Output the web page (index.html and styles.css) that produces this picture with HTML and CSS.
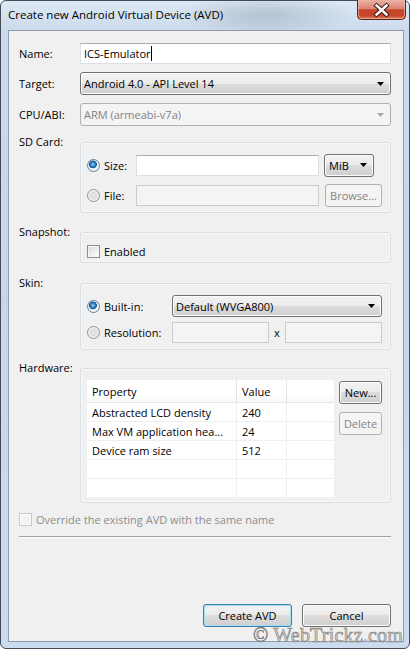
FILE: index.html
```html
<!DOCTYPE html>
<html>
<head>
<meta charset="utf-8">
<title>Create new Android Virtual Device (AVD)</title>
<link rel="stylesheet" href="styles.css">
</head>
<body>
<div class="window">
  <div class="titlebar">
    <span class="title">Create new Android Virtual Device (AVD)</span>
    <div class="close">
      <svg width="49" height="20" viewBox="0 0 49 20">
        <defs>
          <linearGradient id="cg" x1="0" y1="0" x2="0" y2="1">
            <stop offset="0" stop-color="#eab2a5"/>
            <stop offset="0.45" stop-color="#d98472"/>
            <stop offset="0.5" stop-color="#c6462c"/>
            <stop offset="0.8" stop-color="#c9452a"/>
            <stop offset="1" stop-color="#de8a66"/>
          </linearGradient>
        </defs>
        <path d="M0.5 0 V15.5 Q0.5 19.5 4.5 19.5 H44.5 Q48.5 19.5 48.5 15.5 V0" fill="url(#cg)" stroke="#5a2117" stroke-width="1"/>
        <path d="M1.5 0 V15 Q1.5 18.5 5 18.5 H44 Q47.5 18.5 47.5 15 V0" fill="none" stroke="#f2c4b8" stroke-opacity="0.6" stroke-width="1"/>
        <path d="M19.5 5.5 L29.5 14.5 M29.5 5.5 L19.5 14.5" stroke="#3f1c17" stroke-width="4.4" stroke-linecap="square"/>
        <path d="M19.5 5.5 L29.5 14.5 M29.5 5.5 L19.5 14.5" stroke="#ffffff" stroke-width="2.4" stroke-linecap="square"/>
      </svg>
    </div>
  </div>
  <div class="frame">
    <div class="client">
      <div class="row name-row">
        <span class="lbl">Name:</span>
        <div class="textbox wide">ICS-Emulator<span class="caret"></span></div>
      </div>
      <div class="row target-row">
        <span class="lbl">Target:</span>
        <div class="combo wide"><span class="ctext">Android 4.0 - API Level 14</span><svg class="arrow" width="7" height="4" viewBox="0 0 7 4"><path d="M0 0 H7 L3.5 4 Z"/></svg></div>
      </div>
      <div class="row cpu-row">
        <span class="lbl">CPU/ABI:</span>
        <div class="combo wide disabled"><span class="ctext">ARM (armeabi-v7a)</span><svg class="arrow" width="7" height="4" viewBox="0 0 7 4"><path d="M0 0 H7 L3.5 4 Z"/></svg></div>
      </div>

      <div class="grow-row sd-row">
        <span class="lbl">SD Card:</span>
        <div class="group sd-group">
          <label class="opt"><span class="radio on"></span><span>Size:</span></label>
          <div class="textbox"></div>
          <div class="combo mib"><span class="ctext">MiB</span><svg class="arrow" width="7" height="4" viewBox="0 0 7 4"><path d="M0 0 H7 L3.5 4 Z"/></svg></div>
          <label class="opt"><span class="radio"></span><span>File:</span></label>
          <div class="textbox disabled"></div>
          <div class="button disabled browse">Browse...</div>
        </div>
      </div>

      <div class="grow-row snap-row">
        <span class="lbl">Snapshot:</span>
        <div class="group snap-group">
          <label class="opt"><span class="check"></span><span>Enabled</span></label>
        </div>
      </div>

      <div class="grow-row skin-row">
        <span class="lbl">Skin:</span>
        <div class="group skin-group">
          <label class="opt"><span class="radio on"></span><span>Built-in:</span></label>
          <div class="combo"><span class="ctext">Default (WVGA800)</span><svg class="arrow" width="7" height="4" viewBox="0 0 7 4"><path d="M0 0 H7 L3.5 4 Z"/></svg></div>
          <label class="opt"><span class="radio"></span><span>Resolution:</span></label>
          <div class="res">
            <div class="textbox disabled"></div>
            <span class="times">x</span>
            <div class="textbox disabled"></div>
          </div>
        </div>
      </div>

      <div class="grow-row hw-row">
        <span class="lbl">Hardware:</span>
        <div class="group hw-group">
          <div class="table">
            <div class="tr th"><span class="c1">Property</span><span class="c2">Value</span><span class="c3"></span></div>
            <div class="tr"><span class="c1">Abstracted LCD density</span><span class="c2">240</span><span class="c3"></span></div>
            <div class="tr"><span class="c1">Max VM application hea...</span><span class="c2">24</span><span class="c3"></span></div>
            <div class="tr"><span class="c1">Device ram size</span><span class="c2">512</span><span class="c3"></span></div>
            <div class="tr"><span class="c1"></span><span class="c2"></span><span class="c3"></span></div>
            <div class="tr last"><span class="c1"></span><span class="c2"></span><span class="c3"></span></div>
          </div>
          <div class="side">
            <div class="button">New...</div>
            <div class="button disabled">Delete</div>
          </div>
        </div>
      </div>

      <label class="opt override"><span class="check disabled"></span><span>Override the existing AVD with the same name</span></label>
      <div class="sep"></div>

      <div class="actions">
        <div class="button default">Create AVD</div>
        <div class="button">Cancel</div>
      </div>
    </div>
  </div>
  <div class="watermark">© WebTrickz.com</div>
</div>
</body>
</html>
```

FILE: styles.css
```css
html, body {
  margin: 0;
  padding: 0;
}
body {
  width: 410px;
  height: 649px;
  overflow: hidden;
  background: #ffffff;
  font-family: "Open Sans", "Noto Sans", sans-serif;
  font-size: 11px;
  color: #000000;
}
.window {
  position: relative;
  box-sizing: border-box;
  width: 410px;
  height: 649px;
  border: 1px solid #444c57;
  border-radius: 6px;
  display: flex;
  flex-direction: column;
  background:
    radial-gradient(ellipse 90px 22px at 265px 14px, rgba(120,135,150,0.35), rgba(120,135,150,0) 100%),
    linear-gradient(180deg, #dde8f4 0px, #cbdbed 30px, #c6d7eb 300px, #cbdcee 649px);
}
.titlebar {
  height: 29px;
  display: flex;
  align-items: flex-start;
  flex-shrink: 0;
}
.title {
  padding-left: 7px;
  padding-top: 5px;
  line-height: 18px;
  font-size: 11.5px;
  color: #000000;
}
.close {
  margin-left: auto;
  margin-right: 3px;
  margin-top: -1px;
  height: 20px;
}
.close svg {
  display: block;
}
.frame {
  flex: 1;
  display: flex;
  padding: 0 5px 6px 7px;
}
.client {
  flex: 1;
  display: flex;
  flex-direction: column;
  background: #f0f0f0;
  border: 1px solid #8f9bab;
  padding: 12px 12px 14px 10px;
}

/* rows */
.row {
  display: flex;
  align-items: center;
}
.grow-row {
  display: flex;
  align-items: flex-start;
}
.lbl {
  width: 61px;
  flex-shrink: 0;
  line-height: 16px;
}
.wide {
  flex: 1;
}
.target-row { margin-top: 8px; }
.cpu-row { margin-top: 8px; }
.sd-row { margin-top: 8px; }
.snap-row { margin-top: 11px; }
.skin-row { margin-top: 12px; }
.hw-row { margin-top: 10px; }

/* controls */
.textbox {
  box-sizing: border-box;
  height: 21px;
  background: #ffffff;
  border: 1px solid #dbdfe6;
  border-top-color: #abadb3;
  padding: 0 3px;
  line-height: 19px;
  display: flex;
  align-items: center;
}
.textbox.disabled {
  background: #f4f4f4;
  border-color: #c9cbcf;
}
.caret {
  width: 1px;
  height: 15px;
  background: #000000;
}
.combo {
  box-sizing: border-box;
  height: 23px;
  border: 1px solid #707070;
  border-radius: 3px;
  background: linear-gradient(180deg, #f2f2f2 0%, #ebebeb 50%, #dddddd 50%, #cfcfcf 100%);
  box-shadow: inset 0 0 0 1px #fcfcfc;
  display: flex;
  align-items: center;
  padding: 0 6px 0 3px;
}
.ctext {
  flex: 1;
  white-space: nowrap;
}
.arrow {
  display: block;
  fill: #000000;
  flex-shrink: 0;
}
.combo.disabled {
  background: #f4f4f4;
  border-color: #adb2b5;
  box-shadow: none;
  color: #838383;
}
.combo.disabled .arrow {
  fill: #a7a7a7;
}
.button {
  box-sizing: border-box;
  height: 23px;
  border: 1px solid #707070;
  border-radius: 3px;
  background: linear-gradient(180deg, #f2f2f2 0%, #ebebeb 50%, #dddddd 50%, #cfcfcf 100%);
  box-shadow: inset 0 0 0 1px #fcfcfc;
  display: flex;
  align-items: center;
  justify-content: center;
  white-space: nowrap;
}
.button.disabled {
  background: #f4f4f4;
  border-color: #adb2b5;
  box-shadow: none;
  color: #838383;
}
.button.default {
  border-color: #3c7fb1;
  box-shadow: inset 0 0 0 1px #a6dcf6;
}

/* radio / check */
.opt {
  display: flex;
  align-items: center;
  gap: 4px;
  white-space: nowrap;
}
.radio {
  box-sizing: border-box;
  width: 13px;
  height: 13px;
  border-radius: 50%;
  border: 1px solid #8e8f8f;
  background: radial-gradient(circle at 50% 50%, #e8e8e8 0, #dcdcdc 3px, #f6f6f6 5.5px);
  flex-shrink: 0;
}
.radio.on {
  border-color: #5c7f9f;
  background: radial-gradient(circle at 45% 40%, #8fd0f5 0, #3c8dc7 2px, #17528a 3.6px, #e2eef7 4.2px, #f4f4f4 5.5px);
}
.check {
  box-sizing: border-box;
  width: 13px;
  height: 13px;
  border: 1px solid #8e8f8f;
  background: linear-gradient(135deg, #d6d6d6 0%, #f4f4f4 70%, #ffffff 100%);
  box-shadow: inset 0 0 0 1px #f4f4f4;
  flex-shrink: 0;
}
.check.disabled {
  border-color: #c7c8c9;
  background: #f4f4f4;
  box-shadow: inset 0 0 0 1px #fbfbfb;
}

/* groups */
.group {
  box-sizing: border-box;
  flex: 1;
  margin-top: 8px;
  border: 1px solid #d5dfe5;
  border-radius: 3px;
  box-shadow: inset 0 0 0 1px #f8f8f8;
}
.sd-group {
  display: grid;
  grid-template-columns: 43px 183px auto;
  grid-template-rows: 22px 22px;
  column-gap: 6px;
  row-gap: 8px;
  align-items: center;
  justify-items: start;
  padding: 11px 8px 6px 6px;
}
.sd-group .textbox {
  width: 183px;
}
.mib {
  width: 50px;
  height: 23px;
  margin-left: -1px;
  padding-left: 4px;
}
.browse {
  width: 57px;
}
.snap-group {
  padding: 11px 6px 3px 6px;
}
.snap-group .opt {
  height: 16px;
  margin-top: -1px;
}
.skin-group {
  display: grid;
  grid-template-columns: 79px 210px;
  grid-template-rows: 22px 21px;
  column-gap: 6px;
  row-gap: 5px;
  align-items: center;
  padding: 11px 8px 6px 6px;
}
.skin-group .combo {
  height: 22px;
}
.res {
  display: flex;
  align-items: center;
}
.res .textbox {
  width: 97px;
}
.times {
  width: 16px;
  text-align: center;
}
.hw-group {
  display: flex;
  align-items: flex-start;
  gap: 5px;
  padding: 11px 7px 5px 6px;
}
.table {
  width: 247px;
  background: #ffffff;
  display: flex;
  flex-direction: column;
}
.tr {
  display: flex;
  height: 19px;
  border-bottom: 1px solid #efefef;
  box-sizing: border-box;
}
.tr.th {
  height: 23px;
  border-bottom: 1px solid #e5e5e5;
  background: linear-gradient(180deg, #ffffff 0%, #ffffff 60%, #f7f8f9 100%);
}
.tr.last {
  height: 18px;
  border-bottom: none;
}
.tr span {
  box-sizing: border-box;
  display: flex;
  align-items: center;
  padding: 0 5px;
  white-space: nowrap;
  overflow: hidden;
}
.c1 {
  width: 150px;
  border-right: 1px solid #efefef;
}
.c2 {
  width: 50px;
  border-right: 1px solid #efefef;
}
.c3 {
  flex: 1;
}
.th .c1, .th .c2 {
  border-right-color: #e5e5e5;
}
.side {
  width: 43px;
  display: flex;
  flex-direction: column;
  gap: 8px;
  margin-top: 1px;
}

/* bottom */
.override {
  margin-top: 8px;
  height: 16px;
  color: #8d8d8d;
}
.sep {
  margin-top: 9px;
  border-top: 1px solid #a0a0a0;
  border-bottom: 1px solid #ffffff;
  height: 0;
}
.actions {
  margin-top: auto;
  display: flex;
  justify-content: flex-end;
  gap: 10px;
}
.actions .button {
  width: 89px;
}
.watermark {
  position: absolute;
  right: 6px;
  bottom: 2px;
  font-family: "Liberation Serif", serif;
  font-size: 20px;
  line-height: 22px;
  color: #d2d2d2;
  -webkit-text-stroke: 0.6px #7d7d7d;
  letter-spacing: 0.2px;
}
```
